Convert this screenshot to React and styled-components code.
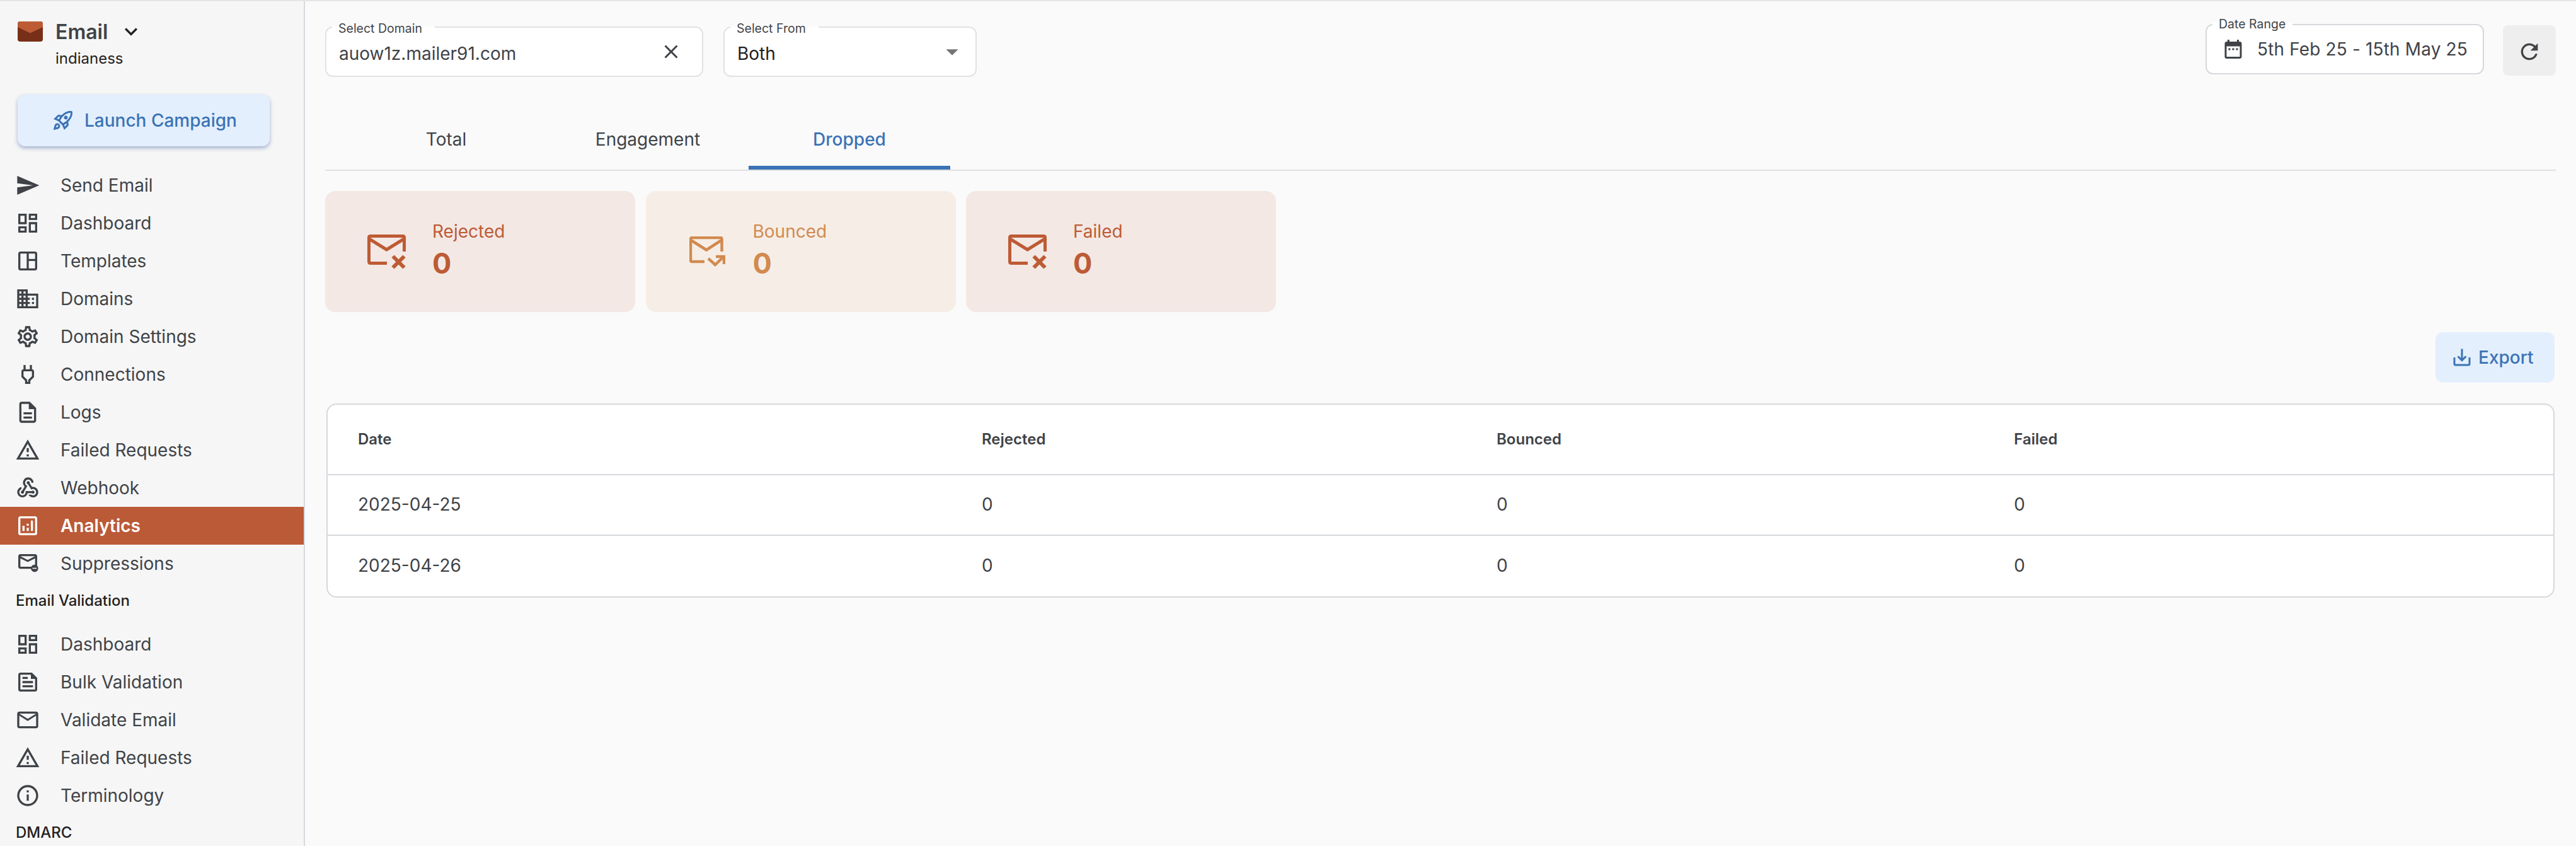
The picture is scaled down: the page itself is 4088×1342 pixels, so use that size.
import React from 'react';
import styled, { createGlobalStyle } from 'styled-components';
import {
  MdSend,
  MdOutlineDashboard,
  MdOutlineSpaceDashboard,
  MdDomain,
  MdOutlineSettings,
  MdOutlinePower,
  MdOutlineDescription,
  MdOutlineWarningAmber,
  MdOutlineWebhook,
  MdOutlineAnalytics,
  MdOutlineUnsubscribe,
  MdOutlineFeed,
  MdMailOutline,
  MdInfoOutline,
  MdOutlineRocketLaunch,
  MdKeyboardArrowDown,
  MdClose,
  MdArrowDropDown,
  MdDateRange,
  MdRefresh,
  MdSaveAlt,
} from 'react-icons/md';

const GlobalStyle = createGlobalStyle`
  html, body {
    margin: 0;
    padding: 0;
    background: #fafafa;
    font-family: Inter, "Liberation Sans", sans-serif;
    color: #3f4347;
  }
  * {
    box-sizing: border-box;
  }
`;

const Page = styled.div`
  display: flex;
  height: 1342px;
  overflow: hidden;
  border-top: 2px solid #e5e5e5;
`;

const Sidebar = styled.aside`
  flex: 0 0 484px;
  height: 100%;
  overflow: hidden;
  background: #f6f6f6;
  border-right: 2px solid #d5d8dc;
`;

const Brand = styled.div`
  padding: 30px 0 0 28px;
  height: 148px;
`;

const BrandRow = styled.div`
  display: flex;
  align-items: center;
  height: 36px;
`;

const BrandName = styled.span`
  margin-left: 20px;
  font-size: 32px;
  font-weight: 600;
  color: #3f4347;
`;

const BrandChevron = styled(MdKeyboardArrowDown)`
  margin-left: 17px;
  color: #222;
`;

const BrandSub = styled.div`
  margin: 8px 0 0 60px;
  font-size: 24px;
  line-height: 34px;
  color: #222;
`;

const CampaignButton = styled.button`
  display: flex;
  align-items: center;
  gap: 16px;
  width: 400px;
  height: 82px;
  margin-left: 28px;
  padding-left: 54px;
  border: 0;
  border-radius: 12px;
  background: #e3effd;
  color: #3b73b5;
  font-family: inherit;
  font-size: 28px;
  font-weight: 500;
  box-shadow: 0 3px 6px rgba(59, 90, 160, 0.45);
`;

const NavList = styled.nav`
  margin-top: 32px;
`;

const NavItem = styled.div`
  display: flex;
  align-items: center;
  gap: 32px;
  height: 60px;
  padding-left: 24px;
  font-size: 28px;
  font-weight: ${(p) => (p.$active ? 600 : 400)};
  color: ${(p) => (p.$active ? '#fff' : '#3f4347')};
  background: ${(p) => (p.$active ? '#bb5a36' : 'transparent')};
`;

const SectionLabel = styled.div`
  padding: 14px 0 24px 25px;
  font-size: 24px;
  line-height: 30px;
  font-weight: 500;
  color: #222;
`;

const Main = styled.main`
  flex: 1;
  min-width: 0;
  padding: 36px 32px 0;
  background: #fafafa;
`;

const FilterBar = styled.div`
  display: flex;
  justify-content: space-between;
  align-items: flex-start;
  height: 135px;
`;

const FilterGroup = styled.div`
  display: flex;
  gap: ${(p) => p.$gap || 32}px;
  margin-top: ${(p) => p.$top || 0}px;
`;

const Field = styled.div`
  position: relative;
  display: flex;
  align-items: center;
  justify-content: space-between;
  width: ${(p) => p.$width}px;
  height: 80px;
  padding: 0 ${(p) => p.$right || 20}px 0 ${(p) => p.$left || 20}px;
  background: #fff;
  border: 2px solid ${(p) => p.$border || '#e2e2e2'};
  border-radius: 12px;
`;

const FieldLabel = styled.span`
  position: absolute;
  top: ${(p) => p.$top || -10}px;
  left: 9px;
  padding: 0 ${(p) => p.$pad || 20}px 0 10px;
  font-size: 19.5px;
  line-height: 22px;
  color: #3f4347;
  background: linear-gradient(to bottom, transparent 8px, #fff 8px);
`;

const FieldValue = styled.span`
  margin-top: 6px;
  font-size: 28px;
  color: ${(p) => p.$color || '#3f4347'};
`;

const DateValue = styled.div`
  display: flex;
  align-items: center;
  gap: 20px;
  font-size: 28px;
  letter-spacing: 0.15px;
  color: #3f4347;
`;

const RefreshButton = styled.button`
  display: flex;
  align-items: center;
  justify-content: center;
  width: 84px;
  height: 80px;
  margin-top: 2px;
  padding: 3px 0 0;
  border: 0;
  border-radius: 8px;
  background: #eeeeee;
  color: #3f4347;
`;

const TabBar = styled.div`
  display: flex;
  padding-left: 32px;
  border-bottom: 2px solid #e0e0e0;
`;

const Tab = styled.div`
  position: relative;
  display: flex;
  align-items: center;
  justify-content: center;
  width: 320px;
  height: 96px;
  font-size: 28px;
  color: ${(p) => (p.$active ? '#3b73b5' : '#3f4347')};
  font-weight: ${(p) => (p.$active ? 500 : 400)};
  &::after {
    content: '';
    display: ${(p) => (p.$active ? 'block' : 'none')};
    position: absolute;
    left: 0;
    right: 0;
    bottom: 0;
    height: 6px;
    background: #3b73b5;
  }
`;

const CardRow = styled.div`
  display: flex;
  gap: 16.5px;
  margin-top: 32px;
`;

const Card = styled.div`
  display: grid;
  grid-template-columns: 170px 1fr;
  align-items: center;
  width: 492px;
  height: 192px;
  border-radius: 16px;
  background: ${(p) => p.$bg};
  color: ${(p) => p.$color};
`;

const CardIcon = styled.div`
  display: flex;
  justify-content: center;
  margin-left: 25px;
`;

const CardText = styled.div`
  padding-bottom: 2px;
`;

const CardLabel = styled.div`
  margin-bottom: 2px;
  font-size: 28px;
  line-height: 38px;
  font-weight: 400;
`;

const CardValue = styled.div`
  font-size: 45px;
  line-height: 60px;
  font-weight: 700;
`;

const ExportRow = styled.div`
  display: flex;
  justify-content: flex-end;
  margin: 32px 2px 33px 0;
`;

const ExportButton = styled.button`
  display: flex;
  align-items: center;
  gap: 8px;
  width: 189px;
  height: 80px;
  padding: 0 0 0 24px;
  border: 0;
  border-radius: 12px;
  background: #e3effd;
  color: #3b73b5;
  font-family: inherit;
  font-size: 28px;
  font-weight: 500;
`;

const TableCard = styled.div`
  margin: 0 2px;
  background: #fff;
  border: 2px solid #d5d8dc;
  border-radius: 16px;
  overflow: hidden;
`;

const TableRow = styled.div`
  display: grid;
  grid-template-columns: 990px 817px 821px 1fr;
  align-items: center;
  height: ${(p) => p.$height}px;
  padding: 0 0 2px 48px;
  font-size: ${(p) => (p.$head ? 24 : 28)}px;
  font-weight: ${(p) => (p.$head ? 600 : 400)};
  color: #3f4347;
  border-bottom: ${(p) => (p.$last ? 'none' : '2px solid #d5d8dc')};
`;

const RejectedIcon = ({ color }) => (
  <svg width="61" height="55" viewBox="0 0 61 55" fill="none" stroke={color}>
    <path d="M31 45.5H5Q2.5 45.5 2.5 43V5Q2.5 2.5 5 2.5H56Q58.5 2.5 58.5 5V27" strokeWidth="5" />
    <path d="M3 7L30.5 24L58 7" strokeWidth="5" />
    <path d="M40.5 34.5L58.5 52.5M58.5 34.5L40.5 52.5" strokeWidth="6" />
  </svg>
);

const BouncedIcon = ({ color }) => (
  <svg width="57" height="48" viewBox="0 0 57 48" fill="none" stroke={color}>
    <path d="M24 40H4.5Q2 40 2 37.5V4.5Q2 2 4.5 2H49Q51.5 2 51.5 4.5V24" strokeWidth="4.5" />
    <path d="M2.5 6L27 21.5L51 6" strokeWidth="4.5" />
    <path d="M30 35L41 45L54 32.5" strokeWidth="4.5" />
    <path d="M42 32H55V44" strokeWidth="4.5" />
  </svg>
);

const BrandLogo = () => (
  <svg width="40" height="32" viewBox="0 0 40 32">
    <rect width="40" height="32" rx="4" fill="#782f17" />
    <path d="M0 4a4 4 0 0 1 4-4h32a4 4 0 0 1 4 4v5L20 18.500L0 9z" fill="#bd5b35" />
  </svg>
);

const emailNav = [
  ['Send Email', MdSend],
  ['Dashboard', MdOutlineDashboard],
  ['Templates', MdOutlineSpaceDashboard],
  ['Domains', MdDomain],
  ['Domain Settings', MdOutlineSettings],
  ['Connections', MdOutlinePower],
  ['Logs', MdOutlineDescription],
  ['Failed Requests', MdOutlineWarningAmber],
  ['Webhook', MdOutlineWebhook],
  ['Analytics', MdOutlineAnalytics, true],
  ['Suppressions', MdOutlineUnsubscribe],
];

const validationNav = [
  ['Dashboard', MdOutlineDashboard],
  ['Bulk Validation', MdOutlineFeed],
  ['Validate Email', MdMailOutline],
  ['Failed Requests', MdOutlineWarningAmber],
  ['Terminology', MdInfoOutline],
];

const cards = [
  { label: 'Rejected', bg: '#f3e8e4', color: '#bd5b35', Icon: RejectedIcon },
  { label: 'Bounced', bg: '#f6eee6', color: '#d28a50', Icon: BouncedIcon },
  { label: 'Failed', bg: '#f3e8e4', color: '#bd5b35', Icon: RejectedIcon },
];

const NavGroup = ({ items }) =>
  items.map(([label, Icon, active]) => (
    <NavItem key={label} $active={active}>
      <Icon size={40} />
      {label}
    </NavItem>
  ));

const App = () => (
  <>
    <GlobalStyle />
    <Page>
      <Sidebar>
        <Brand>
          <BrandRow>
            <BrandLogo />
            <BrandName>Email</BrandName>
            <BrandChevron size={40} />
          </BrandRow>
          <BrandSub>indianess</BrandSub>
        </Brand>
        <CampaignButton>
          <MdOutlineRocketLaunch size={36} />
          Launch Campaign
        </CampaignButton>
        <NavList>
          <NavGroup items={emailNav} />
          <SectionLabel>Email Validation</SectionLabel>
          <NavGroup items={validationNav} />
          <SectionLabel>DMARC</SectionLabel>
        </NavList>
      </Sidebar>
      <Main>
        <FilterBar>
          <FilterGroup $top={4}>
            <Field $width={600} $right={31}>
              <FieldLabel>Select Domain</FieldLabel>
              <FieldValue>auow1z.mailer91.com</FieldValue>
              <MdClose size={36} />
            </Field>
            <Field $width={402} $right={14}>
              <FieldLabel>Select From</FieldLabel>
              <FieldValue $color="#222">Both</FieldValue>
              <MdArrowDropDown size={46} color="#757575" />
            </Field>
          </FilterGroup>
          <FilterGroup $gap={30}>
            <Field $width={442} $left={24} $border="#d5d8dc">
              <FieldLabel $top={-13} $pad={11}>Date Range</FieldLabel>
              <DateValue>
                <MdDateRange size={36} />
                5th Feb 25 - 15th May 25
              </DateValue>
            </Field>
            <RefreshButton>
              <MdRefresh size={40} />
            </RefreshButton>
          </FilterGroup>
        </FilterBar>
        <TabBar>
          <Tab>Total</Tab>
          <Tab>Engagement</Tab>
          <Tab $active>Dropped</Tab>
        </TabBar>
        <CardRow>
          {cards.map(({ label, bg, color, Icon }) => (
            <Card key={label} $bg={bg} $color={color}>
              <CardIcon>
                <Icon color={color} />
              </CardIcon>
              <CardText>
                <CardLabel>{label}</CardLabel>
                <CardValue>0</CardValue>
              </CardText>
            </Card>
          ))}
        </CardRow>
        <ExportRow>
          <ExportButton>
            <MdSaveAlt size={36} />
            Export
          </ExportButton>
        </ExportRow>
        <TableCard>
          <TableRow $head $height={112}>
            <span>Date</span>
            <span>Rejected</span>
            <span>Bounced</span>
            <span>Failed</span>
          </TableRow>
          <TableRow $height={96}>
            <span>2025-04-25</span>
            <span>0</span>
            <span>0</span>
            <span>0</span>
          </TableRow>
          <TableRow $height={96} $last>
            <span>2025-04-26</span>
            <span>0</span>
            <span>0</span>
            <span>0</span>
          </TableRow>
        </TableCard>
      </Main>
    </Page>
  </>
);

export default App;
